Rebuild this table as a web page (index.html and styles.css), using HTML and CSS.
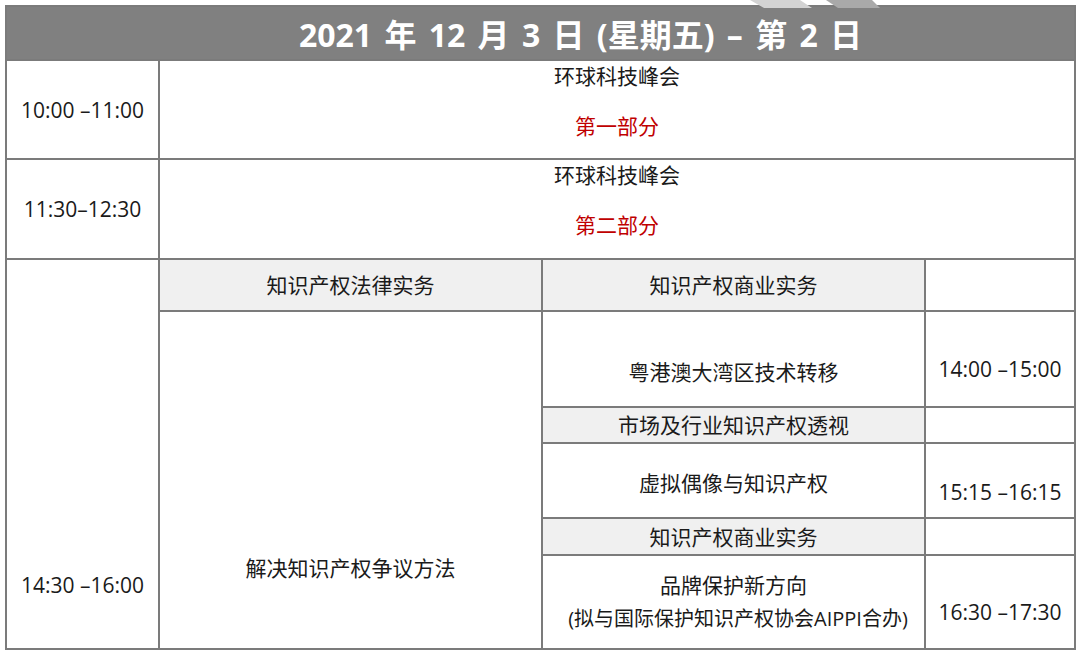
FILE: index.html
```html
<!DOCTYPE html>
<html lang="zh-CN">
<head>
<meta charset="utf-8">
<title>日程</title>
<link rel="stylesheet" href="styles.css">
</head>
<body>
<svg class="mark" width="1080" height="8" viewBox="0 0 1080 8">
  <polygon points="750,0 800,0 812,8 764,8" fill="#d3d3d3"/>
  <polygon points="826,0 872,0 880,8 838,8" fill="#a9a9a9"/>
</svg>
<div class="sched">
  <div class="head"><span>2021 年 12 月 3 日 (星期五) – 第 2 日</span></div>

  <div class="cell time">10:00 –11:00</div>
  <div class="cell wide">
    <p>环球科技峰会</p>
    <p class="red">第一部分</p>
  </div>

  <div class="cell time">11:30–12:30</div>
  <div class="cell wide">
    <p>环球科技峰会</p>
    <p class="red">第二部分</p>
  </div>

  <div class="cell time tall">14:30 –16:00</div>
  <div class="cell gray">知识产权法律实务</div>
  <div class="cell gray">知识产权商业实务</div>
  <div class="cell"></div>

  <div class="cell law">解决知识产权争议方法</div>
  <div class="cell pt26">粤港澳大湾区技术转移</div>
  <div class="cell pt20">14:00 –15:00</div>

  <div class="cell gray">市场及行业知识产权透视</div>
  <div class="cell"></div>

  <div class="cell pt5">虚拟偶像与知识产权</div>
  <div class="cell pt23">15:15 –16:15</div>

  <div class="cell gray">知识产权商业实务</div>
  <div class="cell"></div>

  <div class="cell two">
    <p>品牌保护新方向</p>
    <p class="small">(拟与国际保护知识产权协会AIPPI合办)</p>
  </div>
  <div class="cell pt20">16:30 –17:30</div>
</div>
</body>
</html>
```

FILE: styles.css
```css
html, body {
  margin: 0;
  padding: 0;
  background: #ffffff;
}
body {
  width: 1080px;
  height: 654px;
  overflow: hidden;
  position: relative;
  font-family: "Open Sans", "Noto Sans CJK SC", sans-serif;
  color: #1a1a1a;
}
.mark {
  position: absolute;
  left: 0;
  top: 0;
  display: block;
}
.sched {
  margin: 5px 0 0 5px;
  width: 1071px;
  box-sizing: border-box;
  padding: 2px;
  background: #7b7b7b;
  display: grid;
  grid-template-columns: 151px 381px 381px 148px;
  grid-template-rows: 52px 97px 98px 50px 94px 34px 73px 35px 92px;
  gap: 2px;
  font-size: 21px;
}
.head {
  grid-column: 1 / 5;
  background: #808080;
  color: #ffffff;
  font-weight: 700;
  font-size: 32px;
  word-spacing: 4px;
  display: flex;
  align-items: center;
  justify-content: center;
  padding-left: 80px;
  box-sizing: border-box;
}
.cell {
  background: #ffffff;
  display: flex;
  flex-direction: column;
  align-items: center;
  justify-content: center;
  text-align: center;
  line-height: 30px;
  box-sizing: border-box;
  white-space: nowrap;
}
.cell p {
  margin: 0;
  line-height: 30px;
}
.wide {
  grid-column: 2 / 5;
  justify-content: flex-start;
  gap: 20px;
}
.red {
  color: #c00000;
}
.gray {
  background: #f0f0f0;
}
.tall {
  grid-row: 4 / 10;
  justify-content: flex-end;
  padding-bottom: 48px;
}
.law {
  grid-row: 5 / 10;
  justify-content: flex-end;
  padding-bottom: 65px;
}
.pt26 { padding-top: 26px; }
.pt20 { padding-top: 20px; }
.pt5 { padding-top: 5px; }
.pt23 { padding-top: 23px; }
.two p {
  line-height: 33px;
}
.two .small {
  font-size: 20px;
  padding-left: 9px;
}
```
